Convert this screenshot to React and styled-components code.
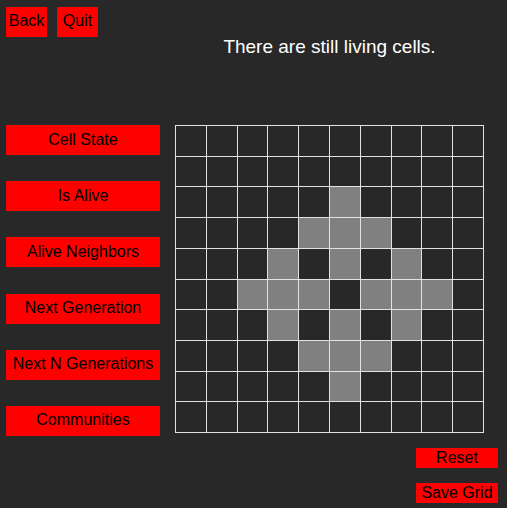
import styled, { createGlobalStyle } from 'styled-components'

const GlobalStyle = createGlobalStyle`
  html, body {
    margin: 0;
    padding: 0;
    background: #282828;
  }
  body {
    font-family: "Liberation Sans", Arial, sans-serif;
  }
`

const ALIVE = [
  [2, 5],
  [3, 4], [3, 5], [3, 6],
  [4, 3], [4, 5], [4, 7],
  [5, 2], [5, 3], [5, 4], [5, 6], [5, 7], [5, 8],
  [6, 3], [6, 5], [6, 7],
  [7, 4], [7, 5], [7, 6],
  [8, 5],
]

const SIDE_ACTIONS = ['Cell State', 'Is Alive', 'Alive Neighbors', 'Next Generation', 'Next N Generations', 'Communities']

const Page = styled.div`
  display: grid;
  grid-template-columns: 154px 1fr;
  column-gap: 15px;
  width: 507px;
  height: 508px;
  box-sizing: border-box;
  padding: 7px 9px 0 6px;
  background: #282828;
`

const LeftColumn = styled.div`
  display: flex;
  flex-direction: column;
`

const Nav = styled.div`
  display: flex;
  gap: 10px;
  height: 30px;
`

const RedButton = styled.button`
  border: none;
  border-radius: 0;
  background: #ff0000;
  color: #000;
  font-family: "Liberation Sans", Arial, sans-serif;
  font-size: 16px;
  line-height: 18px;
  padding: 0 0 1px;
  cursor: pointer;
`

const NavButton = styled(RedButton)`
  width: 41px;
  height: 30px;
  padding-bottom: 2px;
`

const SideList = styled.div`
  display: flex;
  flex-direction: column;
  gap: 26.2px;
  margin-top: 88px;
`

const SideButton = styled(RedButton)`
  width: 154px;
  height: 30px;
`

const RightColumn = styled.div`
  display: flex;
  flex-direction: column;
`

const Title = styled.div`
  width: 309px;
  height: 118px;
  box-sizing: border-box;
  padding-top: 29px;
  color: #fff;
  font-size: 19px;
  line-height: 22px;
  text-align: center;
`

const Board = styled.div`
  display: grid;
  grid-template-columns: repeat(10, 1fr);
  grid-template-rows: repeat(10, 1fr);
  gap: 1px;
  padding: 1px;
  width: 309px;
  height: 308px;
  box-sizing: border-box;
  background: #e2e2e2;
`

const Cell = styled.div`
  background: ${({ $alive }) => ($alive ? '#808080' : '#282828')};
`

const Actions = styled.div`
  display: flex;
  flex-direction: column;
  align-items: flex-end;
  gap: 15px;
  margin-top: 15px;
`

const ActionButton = styled(RedButton)`
  width: 82px;
  height: 20px;
  padding: 0;
`

const isAlive = (r, c) => ALIVE.some(([ar, ac]) => ar === r && ac === c)

export default function App() {
  const cells = []
  for (let r = 0; r < 10; r++) {
    for (let c = 0; c < 10; c++) {
      cells.push(<Cell key={`${r}-${c}`} $alive={isAlive(r, c)} />)
    }
  }

  return (
    <>
      <GlobalStyle />
      <Page>
        <LeftColumn>
          <Nav>
            <NavButton>Back</NavButton>
            <NavButton>Quit</NavButton>
          </Nav>
          <SideList>
            {SIDE_ACTIONS.map((label) => (
              <SideButton key={label}>{label}</SideButton>
            ))}
          </SideList>
        </LeftColumn>
        <RightColumn>
          <Title>There are still living cells.</Title>
          <Board>{cells}</Board>
          <Actions>
            <ActionButton>Reset</ActionButton>
            <ActionButton>Save Grid</ActionButton>
          </Actions>
        </RightColumn>
      </Page>
    </>
  )
}
